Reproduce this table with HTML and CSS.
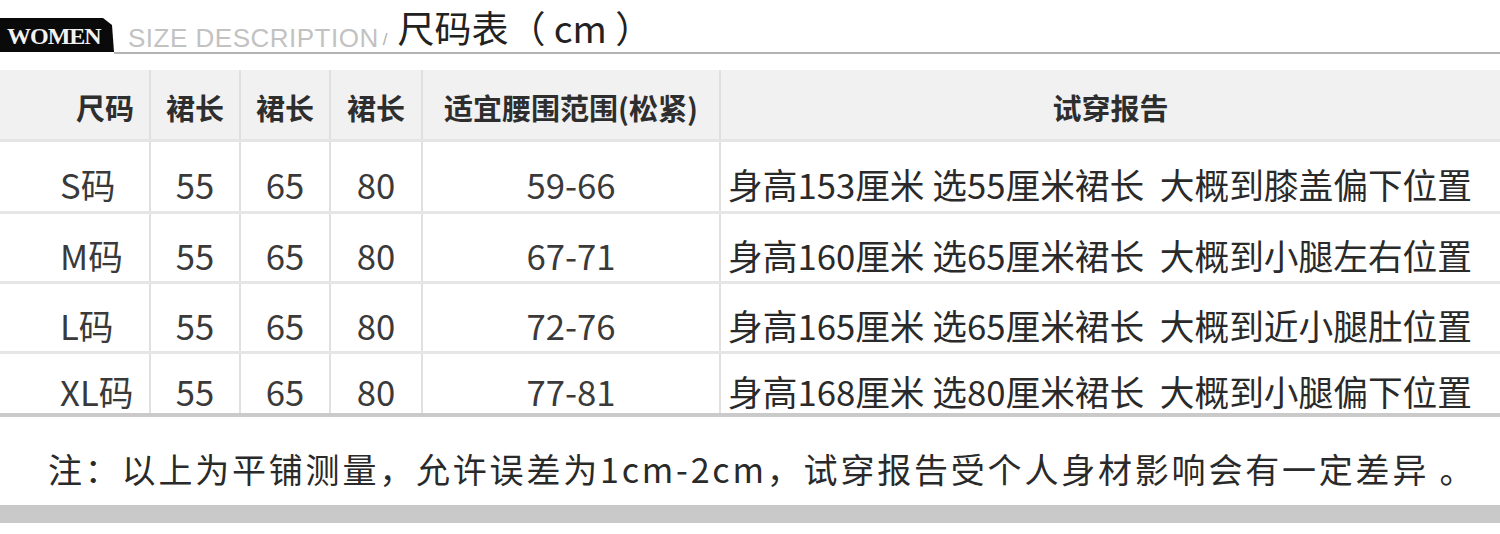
FILE: index.html
```html
<!DOCTYPE html>
<html lang="zh-CN">
<head>
<meta charset="utf-8">
<title>尺码表</title>
<link rel="stylesheet" href="styles.css">
</head>
<body>
<div class="page">
  <header class="title-bar">
    <div class="tab">WOMEN</div>
    <div class="title-line">
      <span class="title-en">SIZE DESCRIPTION</span><span class="slash">/</span><span class="title-cn">尺码表（ cm ）</span>
    </div>
  </header>

  <table class="size-table">
    <colgroup>
      <col class="c-size"><col class="c-len"><col class="c-len"><col class="c-len3"><col class="c-waist"><col class="c-report">
    </colgroup>
    <thead>
      <tr>
        <th class="first">尺码</th>
        <th>裙长</th>
        <th>裙长</th>
        <th>裙长</th>
        <th>适宜腰围范围(松紧)</th>
        <th>试穿报告</th>
      </tr>
    </thead>
    <tbody>
      <tr class="r-s">
        <td class="first">S码</td><td>55</td><td>65</td><td>80</td><td>59-66</td>
        <td class="report">身高153厘米 选55厘米裙长&nbsp;&nbsp;大概到膝盖偏下位置</td>
      </tr>
      <tr class="r-m">
        <td class="first">M码</td><td>55</td><td>65</td><td>80</td><td>67-71</td>
        <td class="report">身高160厘米 选65厘米裙长&nbsp;&nbsp;大概到小腿左右位置</td>
      </tr>
      <tr class="r-l">
        <td class="first">L码</td><td>55</td><td>65</td><td>80</td><td>72-76</td>
        <td class="report">身高165厘米 选65厘米裙长&nbsp;&nbsp;大概到近小腿肚位置</td>
      </tr>
      <tr class="r-xl">
        <td class="first">XL码</td><td>55</td><td>65</td><td>80</td><td>77-81</td>
        <td class="report">身高168厘米 选80厘米裙长&nbsp;&nbsp;大概到小腿偏下位置</td>
      </tr>
    </tbody>
  </table>

  <p class="note">注：以上为平铺测量，允许误差为1cm-2cm，试穿报告受个人身材影响会有一定差异 。</p>

  <div class="bottom-bar"></div>
</div>
</body>
</html>
```

FILE: styles.css
```css
* { box-sizing: border-box; }

html, body {
  margin: 0;
  padding: 0;
  background: #ffffff;
}

.page {
  width: 1500px;
  height: 534px;
  overflow: hidden;
  font-family: "Noto Sans CJK SC", "Noto Sans", sans-serif;
  color: #333333;
}

/* ---------- title ---------- */
.title-bar {
  display: flex;
  align-items: flex-end;
  padding-top: 6px;
}

.tab {
  width: 114px;
  height: 34px;
  margin-bottom: 2px;
  background: #0a0a0a;
  color: #f2f2f2;
  font-family: "Liberation Serif", serif;
  font-weight: bold;
  font-size: 24px;
  letter-spacing: -1px;
  line-height: 36px;
  padding-left: 7px;
  clip-path: polygon(0 0, 103px 0, 112px 7px, 114px 100%, 0 100%);
}

.title-line {
  flex: 1;
  display: flex;
  align-items: flex-end;
  height: 48px;
  border-bottom: 2px solid #b4b4b4;
  padding-left: 14px;
  white-space: pre;
}

.title-en {
  font-family: "Liberation Sans", sans-serif;
  font-size: 26px;
  letter-spacing: 0.5px;
  color: #c2c2c2;
  line-height: 26px;
  margin-bottom: 1px;
}

.slash {
  font-family: "Liberation Sans", sans-serif;
  font-size: 17px;
  color: #b0b0b0;
  line-height: 17px;
  margin: 0 0 4px 4px;
}

.title-cn {
  font-size: 37px;
  color: #222222;
  line-height: 40px;
  margin: 0 0 5px 10px;
}

/* ---------- table ---------- */
.size-table {
  margin-top: 16px;
  width: 1500px;
  border-collapse: collapse;
  table-layout: fixed;
}

.c-size { width: 150px; }
.c-len { width: 90px; }
.c-len3 { width: 92px; }
.c-waist { width: 298px; }
.c-report { width: 780px; }

.size-table th,
.size-table td {
  border-left: 2px solid #e0e0e0;
  text-align: center;
  white-space: nowrap;
  padding: 0;
}

.size-table th.first,
.size-table td.first {
  border-left: none;
  text-align: left;
}

.size-table thead tr {
  background: #f1f1f1;
  height: 70px;
}

.size-table th {
  font-size: 29px;
  font-weight: bold;
  line-height: 40px;
  color: #2e2e2e;
  vertical-align: middle;
  padding-top: 6px;
  border-bottom: 3px solid #e4e4e4;
}

.size-table th.first {
  padding-left: 76px;
}

.size-table td {
  font-size: 34.7px;
  line-height: 40px;
  color: #3a3a3a;
  vertical-align: middle;
  padding-top: 16px;
  border-bottom: 3px solid #e6e6e6;
}

.size-table td.first {
  padding-left: 60px;
}

.size-table td.report {
  text-align: left;
  padding-left: 7px;
  color: #2a2a2a;
}

.r-s { height: 72px; }
.r-m { height: 70px; }
.r-l { height: 70px; }
.r-xl { height: 63px; }

.size-table tbody tr.r-xl td {
  border-bottom: 4px solid #cacaca;
}

/* ---------- note ---------- */
.note {
  margin: 0;
  height: 88px;
  padding: 28px 0 0 48px;
  font-size: 34px;
  letter-spacing: 2.8px;
  line-height: 48px;
  color: #2a2a2a;
  white-space: nowrap;
}

.bottom-bar {
  height: 18px;
  background: #c9c9c9;
}
```
